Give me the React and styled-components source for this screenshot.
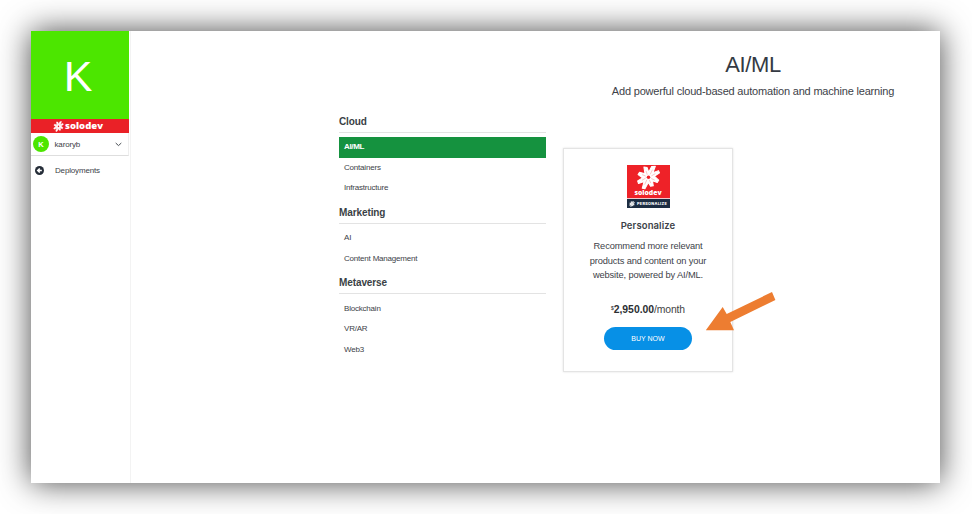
import React from "react";
import styled, { createGlobalStyle } from "styled-components";

const Global = createGlobalStyle`
  * { box-sizing: border-box; }
  body { margin: 0; background: #fff; font-family: "Liberation Sans", Arial, sans-serif; color: #3d4248; }
`;

const Page = styled.div`
  width: 972px;
  height: 514px;
  padding: 31px 32px 31px 31px;
  overflow: hidden;
  position: relative;
`;

const Window = styled.div`
  display: flex;
  width: 909px;
  height: 452px;
  background: #fff;
  box-shadow: 0 0 30px rgba(0, 0, 0, 0.72);
`;

const Sidebar = styled.aside`
  width: 100px;
  flex: none;
  border-right: 1px solid #f3f3f3;
`;

const Banner = styled.div`
  width: 98px;
  height: 88px;
  display: flex;
  align-items: center;
  justify-content: center;
  padding: 3px 4px 0 0;
  background: #4ce600;
  color: #fff;
  font-size: 43px;
`;

const BrandStrip = styled.div`
  width: 98px;
  height: 14px;
  display: flex;
  align-items: center;
  justify-content: center;
  gap: 1px;
  padding-right: 4px;
  background: #ea2127;
`;

const Wordmark = styled.span`
  font-family: "Open Sans", sans-serif;
  font-weight: 800;
  font-size: ${(p) => p.$size}px;
  line-height: 1;
  letter-spacing: ${(p) => p.$track || 0}px;
  color: #fff;
`;

const UserRow = styled.div`
  width: 98px;
  height: 23px;
  display: flex;
  align-items: center;
  padding: 0 6px 0 2px;
  border-bottom: 1px solid #dedede;
  border-right: 1px solid #eee;
`;

const Avatar = styled.span`
  width: 16px;
  height: 16px;
  border-radius: 50%;
  display: grid;
  place-items: center;
  background: #4ce600;
  color: #fff;
  font-size: 7.5px;
  font-weight: bold;
`;

const SideLabel = styled.span`
  flex: 1;
  margin-left: ${(p) => p.$gap}px;
  font-size: 8px;
  letter-spacing: ${(p) => p.$track || 0}px;
  color: #3d4248;
`;

const NavRow = styled.div`
  display: flex;
  align-items: center;
  height: 29px;
  padding-left: 4px;
`;

const Main = styled.main`
  flex: 1;
  display: flex;
  padding-left: 208px;
`;

const Categories = styled.nav`
  width: 207px;
  flex: none;
  padding-top: 78px;
`;

const Heading = styled.h3`
  margin: 0 0 4.5px;
  height: 25px;
  padding-top: 8px;
  border-bottom: 1px solid #e3e3e3;
  font-size: 10px;
  line-height: 12px;
  letter-spacing: -0.1px;
  color: #3a3f45;
  &:first-child {
    height: 24px;
    padding-top: 7px;
    margin-bottom: 4px;
  }
`;

const Item = styled.div`
  height: 20.5px;
  padding-left: 5px;
  font-size: 8px;
  line-height: 20px;
  letter-spacing: ${(p) => (p.$active ? -0.35 : -0.2)}px;
  background: ${(p) => (p.$active ? "#15923f" : "transparent")};
  color: ${(p) => (p.$active ? "#fff" : "#3d4248")};
  font-weight: ${(p) => (p.$active ? "bold" : "normal")};
`;

const Catalog = styled.section`
  width: 380px;
  margin-left: 17px;
`;

const Intro = styled.header`
  padding-top: 21px;
  text-align: center;
`;

const Title = styled.h1`
  margin: 0;
  font-size: 22px;
  font-weight: normal;
  line-height: 26px;
  letter-spacing: -0.4px;
  color: #343a43;
`;

const Subtitle = styled.p`
  margin: 6px 0 0;
  font-size: 11px;
  line-height: 14px;
  letter-spacing: -0.19px;
`;

const Card = styled.article`
  width: 170px;
  height: 224px;
  margin-top: 50px;
  display: flex;
  flex-direction: column;
  align-items: center;
  padding-top: 16px;
  border: 1px solid #e4e4e4;
  box-shadow: 0 0 2px rgba(0, 0, 0, 0.12);
`;

const Logo = styled.div`
  width: 43px;
  height: 43px;
  display: flex;
  flex-direction: column;
  background: #ee2228;
`;

const LogoMark = styled.div`
  height: 34px;
  display: flex;
  flex-direction: column;
  align-items: center;
  border-bottom: 1px solid #f3c8cc;
`;

const LogoFooter = styled.div`
  height: 9px;
  display: flex;
  align-items: center;
  justify-content: center;
  gap: 2px;
  overflow: hidden;
  background: #1c2d42;
  color: #fff;
  font-family: Inter, sans-serif;
  font-size: 3.8px;
  font-weight: 800;
  letter-spacing: 0.3px;
`;

const ProductName = styled.h2`
  margin: 11px 0 0;
  font-family: Inter, sans-serif;
  font-size: 9.5px;
  line-height: 14px;
  font-weight: 600;
  letter-spacing: 0.1px;
`;

const Description = styled.p`
  margin: 6px 0 0;
  font-size: 9.3px;
  line-height: 14.5px;
  letter-spacing: -0.14px;
  text-align: center;
  white-space: nowrap;
`;

const Price = styled.div`
  margin-top: 20px;
  font-size: 10.4px;
  line-height: 14px;
  letter-spacing: -0.15px;
  color: #444;
  b { color: #2c2f33; letter-spacing: 0; }
  sup { font-size: 5px; line-height: 0; font-weight: bold; vertical-align: 3px; }
`;

const BuyButton = styled.button`
  width: 88px;
  height: 23px;
  margin-top: 10px;
  border: 0;
  border-radius: 12px;
  background: #0790e6;
  color: #fff;
  font: 7px "Liberation Sans", Arial, sans-serif;
`;

const Pointer = styled.svg`
  position: absolute;
  left: 704px;
  top: 290px;
`;

function Flower({ size, core = "#ee2228" }) {
  return (
    <svg width={size} height={size} viewBox="0 0 24 24">
      <path
        d="M7.6 2 L10.6 2.4 L12.2 7 L15 1.4 L18.6 1.2 L16.2 7.4 L21.6 5.4 L22.6 7.6 L17.6 10.8 L21.8 14.6 L20.4 16.8 L15.8 15.2 L16.6 20 L14 20.4 L11.8 16.8 L8.6 22.8 L6 22.2 L7.8 15.8 L2.4 17.8 L1.6 15.4 L6.2 12.4 L2 9.2 L3.4 7 L8.6 8.4 Z"
        fill="#fff" stroke="#fff" strokeWidth="1" strokeLinejoin="round"
      />
      <path
        d="M10.8 9.3 L9.6 5.6 M13.6 9 L15.8 4.5 M14.8 10.4 L18.6 8.3 M14.6 13 L18 14.5 M12.8 14.3 L14.2 17.4 M10.4 14.2 L8.4 18.8 M9.2 12.6 L5.6 14.8 M9.2 10.6 L5.8 9.2"
        stroke={core} strokeWidth="0.45" opacity="0.55"
      />
      <circle cx="12" cy="11.7" r="1.7" fill={core} />
    </svg>
  );
}

const sections = [
  { name: "Cloud", items: [{ label: "AI/ML", active: true }, { label: "Containers" }, { label: "Infrastructure" }] },
  { name: "Marketing", items: [{ label: "AI" }, { label: "Content Management" }] },
  { name: "Metaverse", items: [{ label: "Blockchain" }, { label: "VR/AR" }, { label: "Web3" }] },
];

export default function App() {
  return (
    <Page>
      <Global />
      <Window>
        <Sidebar>
          <Banner>K</Banner>
          <BrandStrip>
            <Flower size={11} core="#ea2127" />
            <Wordmark $size={9.5}>solodev</Wordmark>
          </BrandStrip>
          <UserRow>
            <Avatar>K</Avatar>
            <SideLabel $gap={5.5} $track={-0.15}>karoryb</SideLabel>
            <svg width="7" height="5" viewBox="0 0 7 5">
              <path d="M0.7 1 L3.5 3.6 L6.3 1" fill="none" stroke="#4a4f55" strokeWidth="1" />
            </svg>
          </UserRow>
          <NavRow>
            <svg width="9" height="9" viewBox="0 0 10 10">
              <circle cx="5" cy="5" r="5" fill="#252d38" />
              <path d="M5.3 2.7 L3 5 L5.3 7.3 M3.2 5 H7.6" fill="none" stroke="#fff" strokeWidth="1.7" />
            </svg>
            <SideLabel $gap={11} $track={-0.16}>Deployments</SideLabel>
          </NavRow>
        </Sidebar>
        <Main>
          <Categories>
            {sections.map((s) => (
              <React.Fragment key={s.name}>
                <Heading>{s.name}</Heading>
                {s.items.map((i) => (
                  <Item key={i.label} $active={i.active}>{i.label}</Item>
                ))}
              </React.Fragment>
            ))}
          </Categories>
          <Catalog>
            <Intro>
              <Title>AI/ML</Title>
              <Subtitle>Add powerful cloud-based automation and machine learning</Subtitle>
            </Intro>
            <Card>
              <Logo>
                <LogoMark>
                  <Flower size={25} />
                  <Wordmark $size={6.8}>solodev</Wordmark>
                </LogoMark>
                <LogoFooter>
                  <Flower size={6} core="#1c2d42" />
                  PERSONALIZE
                </LogoFooter>
              </Logo>
              <ProductName>Personalize</ProductName>
              <Description>
                Recommend more relevant<br />products and content on your<br />website, powered by AI/ML.
              </Description>
              <Price><sup>$</sup><b>2,950.00</b>/month</Price>
              <BuyButton>BUY NOW</BuyButton>
            </Card>
          </Catalog>
        </Main>
      </Window>
      <Pointer width="74" height="44" viewBox="704 290 74 44">
        <path d="M705.8 330.2 L722.7 307 L726.7 314 L772 292 L775.4 300 L730.3 322 L734 330.2 Z" fill="#ed7d31" />
      </Pointer>
    </Page>
  );
}
